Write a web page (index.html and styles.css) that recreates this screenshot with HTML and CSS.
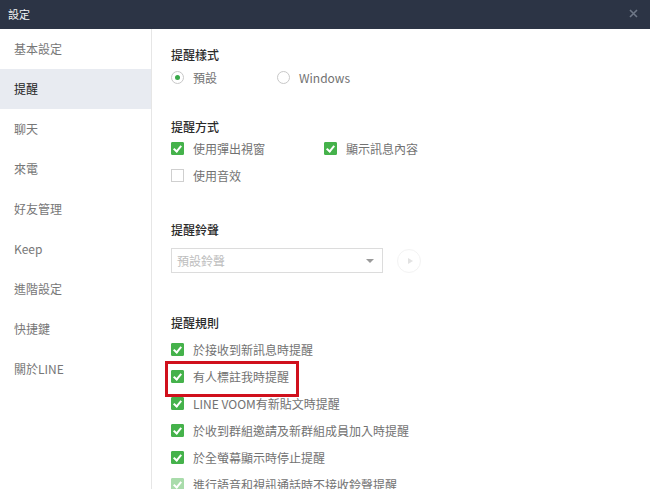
FILE: index.html
```html
<!DOCTYPE html>
<html lang="zh-Hant">
<head>
<meta charset="utf-8">
<link rel="stylesheet" href="styles.css">
</head>
<body>
<div class="window">
  <header class="titlebar">
    <span class="title">設定</span>
    <svg class="close" width="9" height="9" viewBox="0 0 9 9"><path d="M1 1L8 8M8 1L1 8" stroke="#6f7888" stroke-width="1.6" fill="none"/></svg>
  </header>
  <div class="body">
    <nav class="sidebar">
      <div class="nav-item">基本設定</div>
      <div class="nav-item active">提醒</div>
      <div class="nav-item">聊天</div>
      <div class="nav-item">來電</div>
      <div class="nav-item">好友管理</div>
      <div class="nav-item">Keep</div>
      <div class="nav-item">進階設定</div>
      <div class="nav-item">快捷鍵</div>
      <div class="nav-item">關於LINE</div>
    </nav>
    <main class="content">
      <section class="section s-style">
        <h2 class="heading">提醒樣式</h2>
        <div class="row">
          <label class="opt col1"><span class="radio on"></span>預設</label>
          <label class="opt"><span class="radio"></span>Windows</label>
        </div>
      </section>
      <section class="section s-method">
        <h2 class="heading">提醒方式</h2>
        <div class="row">
          <label class="opt col1 wide"><span class="check on"></span>使用彈出視窗</label>
          <label class="opt"><span class="check on"></span>顯示訊息內容</label>
        </div>
        <div class="row">
          <label class="opt"><span class="check"></span>使用音效</label>
        </div>
      </section>
      <section class="section s-sound">
        <h2 class="heading">提醒鈴聲</h2>
        <div class="sound-row">
          <div class="select"><span>預設鈴聲</span><span class="arrow"></span></div>
          <div class="play"><span class="tri"></span></div>
        </div>
      </section>
      <section class="section s-rules">
        <h2 class="heading">提醒規則</h2>
        <div class="rules">
          <div class="row"><label class="opt"><span class="check on"></span>於接收到新訊息時提醒</label></div>
          <div class="row"><label class="opt highlight"><span class="check on"></span>有人標註我時提醒</label></div>
          <div class="row"><label class="opt"><span class="check on"></span>LINE VOOM有新貼文時提醒</label></div>
          <div class="row"><label class="opt"><span class="check on"></span>於收到群組邀請及新群組成員加入時提醒</label></div>
          <div class="row"><label class="opt"><span class="check on"></span>於全螢幕顯示時停止提醒</label></div>
          <div class="row"><label class="opt"><span class="check on dim"></span>進行語音和視訊通話時不接收鈴聲提醒</label></div>
        </div>
      </section>
    </main>
  </div>
</div>
</body>
</html>
```
FILE: styles.css
```css
* { box-sizing: border-box; }
html, body { margin: 0; padding: 0; }
body {
  width: 650px;
  height: 489px;
  overflow: hidden;
  background: #fff;
  font-family: "Noto Sans CJK TC", "Noto Sans", sans-serif;
  font-size: 12px;
  color: #666;
}
.window { display: flex; flex-direction: column; height: 489px; }
.titlebar {
  height: 29px;
  flex: none;
  background: #2c3445;
  display: flex;
  align-items: center;
  justify-content: space-between;
  padding: 0 12px 0 8px;
}
.title { color: #f2f3f5; font-size: 11px; line-height: 1; }
.close { display: block; margin-top: -2px; }
.body { display: flex; flex: 1; min-height: 0; }
.sidebar {
  width: 152px;
  flex: none;
  border-right: 1px solid #e6e6e6;
}
.nav-item {
  height: 40px;
  line-height: 40px;
  padding-left: 14px;
  color: #777;
  font-size: 12px;
}
.nav-item.active { background: #e8ebf1; color: #222; }
.content { flex: 1; padding: 18px 0 0 19px; }
.heading {
  margin: 0;
  font-size: 12px;
  line-height: 16px;
  font-weight: 500;
  color: #2a2a2a;
}
.row { display: flex; align-items: center; height: 27px; }
.opt { display: inline-flex; align-items: center; color: #727272; line-height: 16px; position: relative; }
.col1 { width: 106px; }
.col1.wide { width: 153px; }
.radio {
  width: 13px; height: 13px;
  border: 1px solid #c8c8c8;
  border-radius: 50%;
  margin-right: 9px;
  position: relative;
  flex: none;
}
.radio.on::after {
  content: "";
  position: absolute;
  left: 3px; top: 3px;
  width: 5px; height: 5px;
  border-radius: 50%;
  background: #3aa94a;
}
.check {
  width: 13px; height: 13px;
  border: 1px solid #cfcfcf;
  background: #fff;
  margin-right: 9px;
  position: relative;
  flex: none;
}
.check.on { background: #45b24b; border-color: #45b24b; border-radius: 1px; }
.check.on::after {
  content: "";
  position: absolute;
  left: 3px; top: 1px;
  width: 3px; height: 6px;
  border: solid #fff;
  border-width: 0 2px 2px 0;
  transform: rotate(40deg);
}
.check.dim { background: #a9dcab; border-color: #a9dcab; }
.s-style .row { margin-top: 1px; }
.s-method { margin-top: 28px; }
.s-sound { margin-top: 33px; }
.sound-row { display: flex; align-items: center; margin-top: 10px; }
.select {
  width: 212px; height: 25px;
  border: 1px solid #dcdcdc;
  display: flex; align-items: center; justify-content: space-between;
  padding: 0 8px 0 5px;
  color: #bdbdbd;
}
.arrow {
  width: 0; height: 0;
  border-left: 4px solid transparent;
  border-right: 4px solid transparent;
  border-top: 4px solid #9a9a9a;
}
.play {
  width: 24px; height: 24px;
  border: 1px solid #f3f3f3;
  border-radius: 50%;
  margin-left: 14px;
  display: flex; align-items: center; justify-content: center;
}
.tri {
  width: 0; height: 0;
  border-top: 3px solid transparent;
  border-bottom: 3px solid transparent;
  border-left: 5px solid #e2e2e2;
  margin-left: 2px;
}
.s-rules { margin-top: 42px; }
.rules { margin-top: 5px; }
.highlight::after {
  content: "";
  position: absolute;
  left: -6px; top: -8px;
  width: 128px; height: 30px;
  border: 3px solid #d0101c;
}
```
